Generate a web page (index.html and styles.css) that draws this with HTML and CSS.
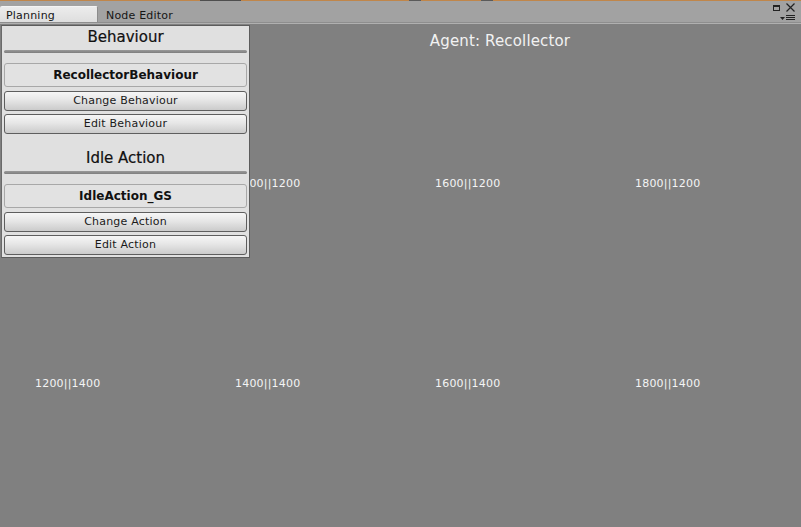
FILE: index.html
```html
<!DOCTYPE html>
<html>
<head>
<meta charset="utf-8">
<link rel="stylesheet" href="styles.css">
</head>
<body>
<div class="window">
  <div class="topline"></div>
  <div class="tabbar">
    <div class="tab active">Planning</div>
    <div class="tab">Node Editor</div>
    <div class="controls">
      <div class="ctl-row">
        <svg width="7" height="6" viewBox="0 0 7 6" class="max"><rect x="0.5" y="0.5" width="6" height="5" fill="none" stroke="#222"/><rect x="0" y="0" width="7" height="2" fill="#222"/></svg>
        <svg width="9" height="9" viewBox="0 0 9 9" class="close"><path d="M0.5 0.5L8.5 8.5M8.5 0.5L0.5 8.5" stroke="#222" stroke-width="1.2"/></svg>
      </div>
      <svg width="15" height="6" viewBox="0 0 15 6" class="menu"><path d="M0 2H5L2.5 5Z" fill="#222"/><rect x="6" y="0" width="9" height="1" fill="#222"/><rect x="6" y="2" width="9" height="1" fill="#222"/><rect x="6" y="4" width="9" height="1" fill="#222"/></svg>
    </div>
  </div>
  <div class="canvas">
    <div class="agent">Agent: Recollector</div>
    <span class="coord" style="left:36px;top:153px">1200||1200</span>
    <span class="coord" style="left:235px;top:153px">1400||1200</span>
    <span class="coord" style="left:435px;top:153px">1600||1200</span>
    <span class="coord" style="left:635px;top:153px">1800||1200</span>
    <span class="coord" style="left:35px;top:353px">1200||1400</span>
    <span class="coord" style="left:235px;top:353px">1400||1400</span>
    <span class="coord" style="left:435px;top:353px">1600||1400</span>
    <span class="coord" style="left:635px;top:353px">1800||1400</span>

    <div class="panel">
      <div class="section">
        <div class="title">Behaviour</div>
        <div class="sep"></div>
        <div class="namebox">RecollectorBehaviour</div>
        <div class="btn">Change Behaviour</div>
        <div class="btn">Edit Behaviour</div>
      </div>
      <div class="section">
        <div class="title">Idle Action</div>
        <div class="sep"></div>
        <div class="namebox">IdleAction_GS</div>
        <div class="btn">Change Action</div>
        <div class="btn">Edit Action</div>
      </div>
    </div>
  </div>
</div>
</body>
</html>
```
FILE: styles.css
```css
html, body {
  margin: 0;
  padding: 0;
}
body {
  width: 801px;
  height: 527px;
  overflow: hidden;
  background: #808080;
  font-family: "DejaVu Sans", Verdana, sans-serif;
}
.window {
  display: flex;
  flex-direction: column;
  height: 527px;
}
.topline {
  height: 1px;
  background: linear-gradient(to right,
    #c0864a 0, #c0864a 200px,
    #4e4e4e 200px, #4e4e4e 241px,
    #c0864a 241px, #c0864a 409px,
    #5a5a5a 409px, #5a5a5a 421px,
    #c0864a 421px, #c0864a 481px,
    #5a5a5a 481px, #5a5a5a 493px,
    #c0864a 493px);
}
.tabbar {
  height: 21px;
  background: #a2a2a2;
  border-bottom: 1px solid #8e8e8e;
  display: flex;
  align-items: flex-end;
  position: relative;
}
.tab {
  height: 16px;
  line-height: 19px;
  font-size: 11px;
  color: #151515;
  padding: 0 6px;
  box-sizing: border-box;
  letter-spacing: 0.2px;
}
.tab.active {
  width: 98px;
  background: linear-gradient(#ececec, #dedede);
  border-top: 1px solid #f4f4f4;
  border-right: 1px solid #8c8c8c;
  border-radius: 2px 2px 0 0;
  line-height: 17px;
}
.tab:not(.active) {
  padding-left: 8px;
}
.controls {
  position: absolute;
  right: 6px;
  top: 2px;
  display: flex;
  flex-direction: column;
  align-items: flex-end;
  gap: 3px;
}
.ctl-row {
  display: flex;
  align-items: center;
  gap: 6px;
}
.max { margin-top: 1px; }
.canvas {
  flex: 1;
  position: relative;
  border-top: 1px solid #b0b0b0;
  background: #808080;
}
.agent {
  text-align: center;
  padding-left: 199px;
  margin-top: 8px;
  font-size: 15px;
  color: #f2f2f2;
  line-height: 18px;
  letter-spacing: 0.15px;
}
.coord {
  position: absolute;
  font-size: 11px;
  color: #f4f4f4;
  line-height: 13px;
  white-space: nowrap;
  letter-spacing: 0.2px;
}
.panel {
  position: absolute;
  left: 1px;
  top: 1px;
  width: 249px;
  box-sizing: border-box;
  background: #e0e0e0;
  border: 1px solid #5c5c5c;
  border-left-color: #6a6a6a;
  padding: 0 2px 2px 2px;
  display: flex;
  flex-direction: column;
  gap: 13px;
}
.section {
  display: flex;
  flex-direction: column;
}
.title {
  height: 24px;
  line-height: 23px;
  text-align: center;
  font-size: 15px;
  color: #111;
  -webkit-text-stroke: 0.2px #111;
}
.sep {
  height: 3px;
  margin-bottom: 10px;
  background: linear-gradient(#9a9a9a, #7e7e7e);
  border-radius: 2px;
}
.namebox {
  height: 24px;
  box-sizing: border-box;
  border: 1px solid #a8a8a8;
  border-radius: 3px;
  background: #e2e2e2;
  text-align: center;
  line-height: 22px;
  font-size: 12px;
  font-weight: bold;
  color: #111;
  margin-bottom: 4px;
}
.btn {
  height: 20px;
  box-sizing: border-box;
  border: 1px solid #5e5e5e;
  border-radius: 3px;
  background: linear-gradient(#f6f6f6, #e6e6e6 45%, #cbcbcb);
  text-align: center;
  line-height: 18px;
  font-size: 11px;
  color: #1a1a1a;
  margin-bottom: 3px;
  letter-spacing: 0.2px;
}
.btn:last-child {
  margin-bottom: 0;
}
```
